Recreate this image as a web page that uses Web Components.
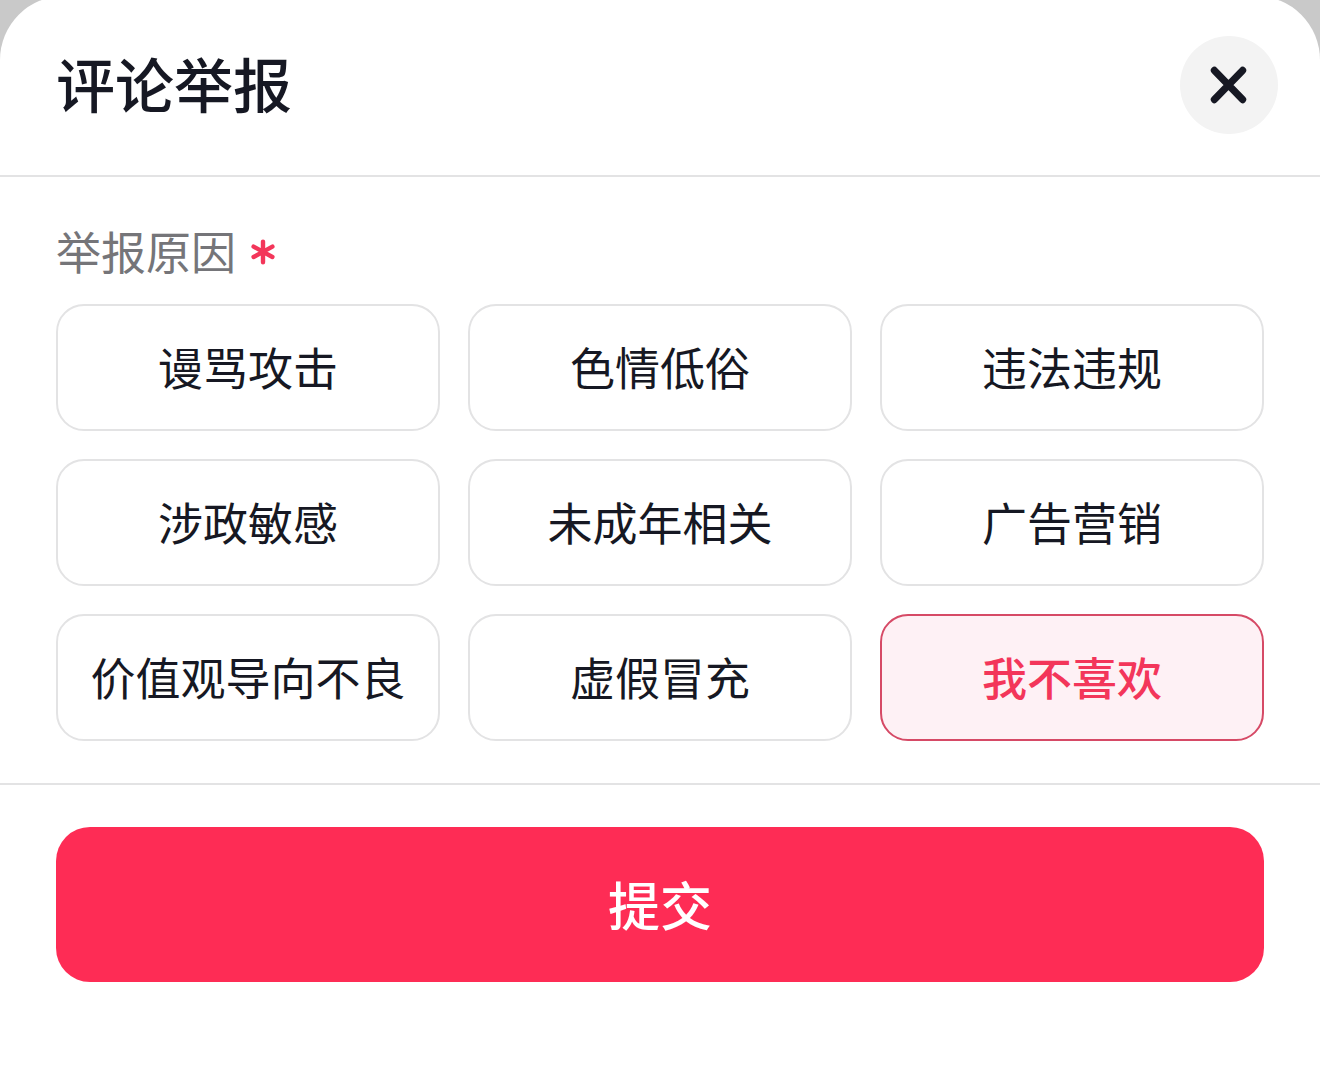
<!DOCTYPE html>
<html lang="zh-CN">
<head>
<meta charset="utf-8">
<meta name="viewport" content="width=device-width, initial-scale=1">
<title>评论举报</title>
<style>
  html { background: #c9c9c9; }
  body {
    margin: 0;
    min-height: 100vh;
    display: flex;
    flex-direction: column;
    overflow-x: hidden;
    font-family: "Noto Sans CJK SC", sans-serif;
    color: #161823;
    --ink: #161823;
    --muted: #757579;
    --line: #e3e3e4;
    --accent: #fe2c55;
    --accent-line: #d64a66;
    --accent-text: #f3365a;
    --accent-soft: #fef1f5;
    --gutter: 56px;
  }
</style>
</head>
<body>
<report-sheet>
  <sheet-header slot="header">评论举报</sheet-header>
  <reason-picker name="reason" selected="我不喜欢"
    options="谩骂攻击,色情低俗,违法违规,涉政敏感,未成年相关,广告营销,价值观导向不良,虚假冒充,我不喜欢">举报原因</reason-picker>
  <submit-bar slot="footer">提交</submit-bar>
</report-sheet>

<template id="report-sheet">
  <style>
    :host { display: flex; flex-direction: column; flex: 1; margin-top: -4px; }
    section {
      flex: 1;
      display: flex;
      flex-direction: column;
      padding-top: 4px;
      background: #fff;
      border-radius: 64px 64px 0 0;
    }
  </style>
  <section role="dialog">
    <slot name="header"></slot>
    <slot></slot>
    <slot name="footer"></slot>
  </section>
</template>

<template id="sheet-header">
  <style>
    :host { display: block; border-bottom: 2px solid var(--line); }
    header {
      display: flex;
      align-items: center;
      justify-content: space-between;
      padding: 36px 42px 41px var(--gutter);
    }
    h1 { margin: 0; padding-bottom: 4px; font-size: 59px; line-height: 88px; font-weight: 500; }
    button {
      display: grid;
      place-items: center;
      width: 98px;
      height: 98px;
      padding: 0;
      border: 0;
      border-radius: 50%;
      background: #f3f3f3;
      color: var(--ink);
      cursor: pointer;
    }
    svg { display: block; }
  </style>
  <header>
    <h1><slot></slot></h1>
    <button type="button" aria-label="关闭">
      <svg width="40" height="40" viewBox="0 0 40 40" fill="none" stroke="currentColor" stroke-width="7.2" stroke-linecap="round" aria-hidden="true">
        <path d="M5.4 5.4 33.6 34.6M33.6 5.4 5.4 34.6"/>
      </svg>
    </button>
  </header>
</template>

<template id="reason-picker">
  <style>
    :host { display: block; padding: 42px var(--gutter); border-bottom: 2px solid var(--line); }
    fieldset { margin: 0; padding: 0; border: 0; min-width: 0; }
    legend {
      display: flex;
      align-items: center;
      gap: 14px;
      padding: 0 0 21px;
      font-size: 45px;
      line-height: 64px;
      color: var(--muted);
    }
    svg { display: block; color: var(--accent-text); }
    .grid { display: grid; grid-template-columns: repeat(3, minmax(0, 1fr)); gap: 28px; }
    label {
      position: relative;
      display: flex;
      align-items: center;
      justify-content: center;
      box-sizing: border-box;
      min-height: 127px;
      padding-bottom: 2px;
      border: 2px solid var(--line);
      border-radius: 28px;
      font-size: 45px;
      line-height: 64px;
      text-align: center;
      cursor: pointer;
    }
    input { position: absolute; inset: 0; margin: 0; opacity: 0; cursor: pointer; }
    label:has(input:checked) {
      border-color: var(--accent-line);
      background: var(--accent-soft);
      color: var(--accent-text);
      font-weight: 500;
    }
  </style>
  <fieldset>
    <legend>
      <slot></slot>
      <svg width="26" height="32" viewBox="0 0 26 32" fill="none" stroke="currentColor" stroke-width="4.4" stroke-linecap="round" role="img" aria-label="必填">
        <path d="M13 6.6V27.2M3.6 11.6 22.4 22M22.4 11.6 3.6 22"/>
      </svg>
    </legend>
    <div class="grid"></div>
  </fieldset>
</template>

<template id="submit-bar">
  <style>
    :host { display: block; padding: 42px var(--gutter); }
    button {
      display: block;
      width: 100%;
      min-height: 155px;
      padding: 0 0 2px;
      border: 0;
      border-radius: 34px;
      background: var(--accent);
      color: #fff;
      font: inherit;
      font-size: 52px;
      line-height: 76px;
      font-weight: 500;
      cursor: pointer;
    }
  </style>
  <button type="submit"><slot></slot></button>
</template>

<script>
  class TemplateElement extends HTMLElement {
    constructor() {
      super();
      const template = document.getElementById(this.localName);
      this.attachShadow({ mode: "open" }).append(template.content.cloneNode(true));
    }
  }

  class ReportSheet extends TemplateElement {}
  class SheetHeader extends TemplateElement {}
  class SubmitBar extends TemplateElement {}

  class ReasonPicker extends TemplateElement {
    connectedCallback() {
      const name = this.getAttribute("name");
      const selected = this.getAttribute("selected");
      const options = this.getAttribute("options").split(",");
      this.shadowRoot.querySelector(".grid").replaceChildren(...options.map((text, i) => {
        const label = document.createElement("label");
        const input = document.createElement("input");
        const span = document.createElement("span");
        input.type = "radio";
        input.name = name;
        input.value = text;
        input.id = `${name}-${i}`;
        input.checked = text === selected;
        label.htmlFor = input.id;
        span.textContent = text;
        label.append(input, span);
        return label;
      }));
    }
  }

  customElements.define("report-sheet", ReportSheet);
  customElements.define("sheet-header", SheetHeader);
  customElements.define("reason-picker", ReasonPicker);
  customElements.define("submit-bar", SubmitBar);
</script>
</body>
</html>
